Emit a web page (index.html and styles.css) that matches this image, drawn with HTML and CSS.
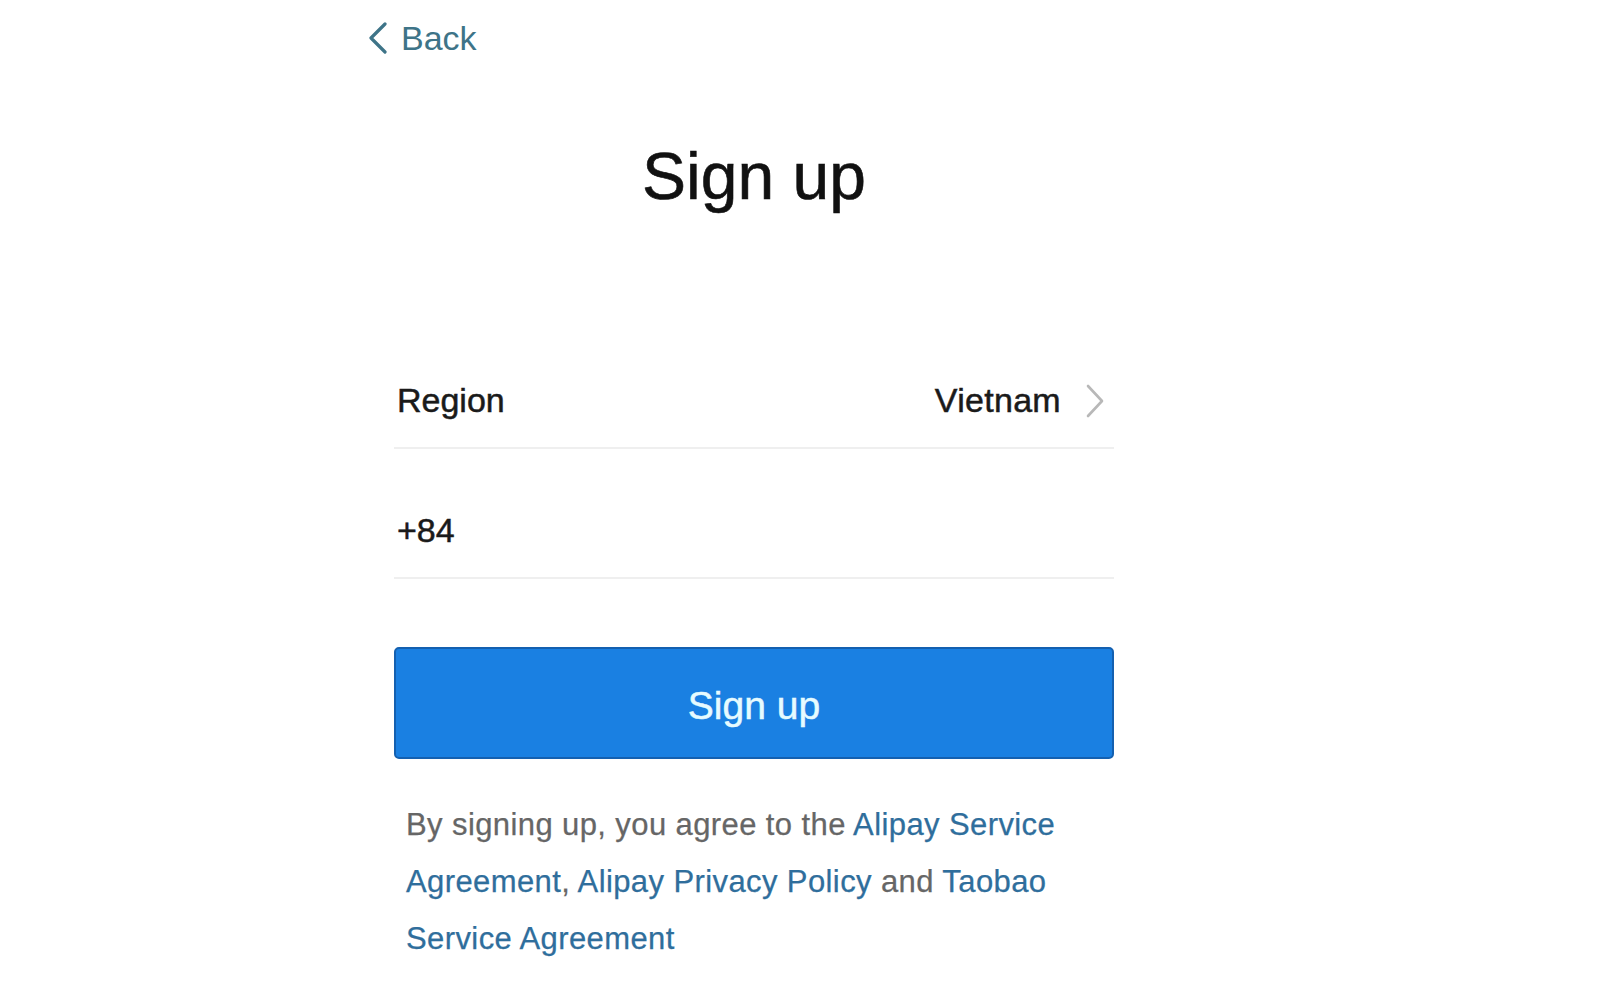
FILE: index.html
```html
<!DOCTYPE html>
<html lang="en">
<head>
<meta charset="utf-8">
<title>Sign up</title>
<link rel="stylesheet" href="styles.css">
</head>
<body>
<div class="page">
  <header class="nav">
    <a class="back" href="#">
      <svg class="back-icon" width="20" height="32" viewBox="0 0 20 32" aria-hidden="true">
        <polyline points="17,2 3,16 17,30" fill="none" stroke="currentColor" stroke-width="3.2" stroke-linecap="round" stroke-linejoin="round"/>
      </svg>
      <span>Back</span>
    </a>
  </header>
  <main class="column">
    <h1 class="title">Sign up</h1>
    <div class="row region">
      <span class="label">Region</span>
      <span class="value">Vietnam
        <svg class="chev" width="20" height="34" viewBox="0 0 20 34" aria-hidden="true">
          <polyline points="3,2 17,17 3,32" fill="none" stroke="currentColor" stroke-width="2.6" stroke-linecap="round" stroke-linejoin="round"/>
        </svg>
      </span>
    </div>
    <div class="row phone">
      <span class="label">+84</span>
    </div>
    <button class="submit" type="button">Sign up</button>
    <div class="terms">
      <p class="line">By signing up, you agree to the <a href="#">Alipay Service</a></p>
      <p class="line"><a href="#">Agreement</a>, <a href="#">Alipay Privacy Policy</a> and <a href="#">Taobao</a></p>
      <p class="line"><a href="#">Service Agreement</a></p>
    </div>
  </main>
</div>
</body>
</html>
```
FILE: styles.css
```css
* { box-sizing: border-box; }
html, body {
  margin: 0;
  padding: 0;
  background: #ffffff;
}
body {
  font-family: "Liberation Sans", Arial, sans-serif;
  color: #151515;
}
.nav {
  height: 76px;
  padding-left: 368px;
  display: flex;
  align-items: center;
}
.back {
  display: flex;
  align-items: center;
  gap: 13px;
  color: #3e7488;
  text-decoration: none;
  font-size: 34px;
  line-height: 1;
}
.back-icon { display: block; }
.column {
  margin-left: 394px;
  width: 720px;
}
.title {
  margin: 67px 0 0;
  font-size: 66px;
  line-height: 66px;
  font-weight: 400;
  text-align: center;
  color: #111111;
  -webkit-text-stroke: 0.6px #111111;
}
.row {
  height: 95px;
  display: flex;
  align-items: center;
  justify-content: space-between;
  padding: 0 9px 0 3px;
  border-bottom: 2px solid #efefef;
  font-size: 34px;
  color: #1a1a1a;
  -webkit-text-stroke: 0.5px #1a1a1a;
}
.region { margin-top: 145px; }
.phone { margin-top: 35px; }
.value {
  display: flex;
  align-items: center;
  gap: 24px;
  letter-spacing: 0.3px;
}
.chev {
  display: block;
  color: #b8b8b8;
}
.submit {
  display: block;
  width: 100%;
  height: 112px;
  margin-top: 68px;
  border: 2px solid #1460b0;
  border-radius: 5px;
  background: #1a80e2;
  color: #e6fbff;
  font-family: "Liberation Sans", Arial, sans-serif;
  font-size: 39px;
  padding-top: 6px;
  -webkit-text-stroke: 0.5px #e6fbff;
  cursor: pointer;
}
.terms {
  margin-top: 37px;
  padding-left: 12px;
}
.line {
  margin: 0;
  font-size: 31px;
  line-height: 57px;
  letter-spacing: 0.4px;
  color: #666666;
  -webkit-text-stroke: 0.25px #666666;
  white-space: nowrap;
}
.line a {
  color: #2f6e9c;
  text-decoration: none;
  -webkit-text-stroke: 0.25px #2f6e9c;
}
```
